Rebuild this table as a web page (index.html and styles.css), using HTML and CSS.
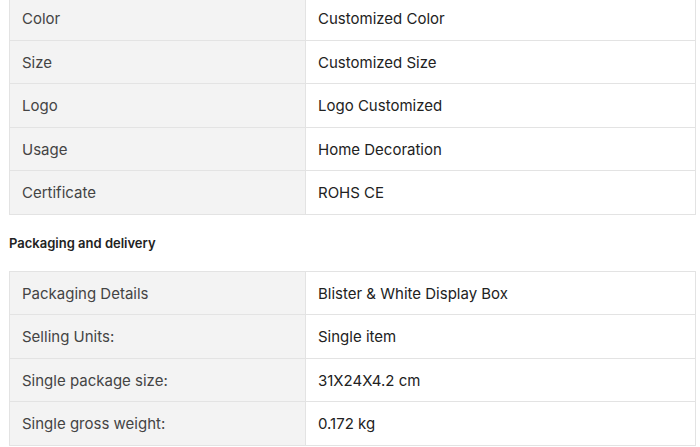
FILE: index.html
```html
<!DOCTYPE html>
<html>
<head>
<meta charset="utf-8">
<link rel="stylesheet" href="styles.css">
</head>
<body>
<div class="page">
  <table class="attrs first">
    <tr><td class="k">Color</td><td class="v">Customized Color</td></tr>
    <tr><td class="k">Size</td><td class="v">Customized Size</td></tr>
    <tr><td class="k">Logo</td><td class="v">Logo Customized</td></tr>
    <tr><td class="k">Usage</td><td class="v">Home Decoration</td></tr>
    <tr><td class="k">Certificate</td><td class="v">ROHS CE</td></tr>
  </table>
  <h3 class="section">Packaging and delivery</h3>
  <table class="attrs">
    <tr><td class="k">Packaging Details</td><td class="v">Blister &amp; White Display Box</td></tr>
    <tr><td class="k">Selling Units:</td><td class="v">Single item</td></tr>
    <tr><td class="k">Single package size:</td><td class="v">31X24X4.2 cm</td></tr>
    <tr><td class="k">Single gross weight:</td><td class="v">0.172 kg</td></tr>
  </table>
</div>
</body>
</html>
```

FILE: styles.css
```css
html, body {
  margin: 0;
  padding: 0;
  background: #fff;
}
.page {
  padding: 0 4px 0 9px;
  font-family: Inter, "Noto Sans", sans-serif;
  overflow: hidden;
  height: 447px;
}
.attrs {
  width: 687px;
  border-collapse: collapse;
  table-layout: fixed;
}
.attrs.first {
  margin-top: -4px;
}
.attrs td {
  border: 1px solid #e3e3e3;
  height: 40.5px;
  padding: 2px 12px 0;
  font-size: 15px;
  line-height: 20px;
  vertical-align: middle;
}
.attrs td.k {
  width: 271px;
  background: #f3f3f3;
  color: #444;
}
.attrs td.v {
  background: #fff;
  color: #222;
}
.section {
  margin: 0;
  height: 56px;
  display: flex;
  align-items: center;
  font-size: 13px;
  font-weight: 600;
  color: #222;
}
```
